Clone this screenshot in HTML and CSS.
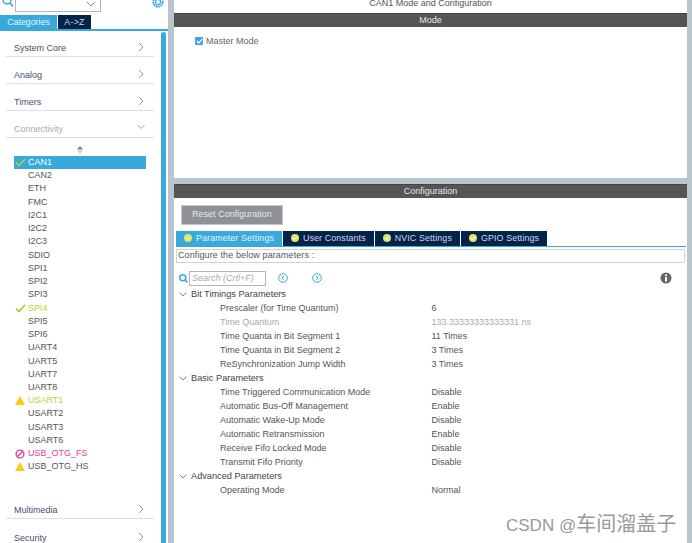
FILE: index.html
```html
<!DOCTYPE html>
<html lang="en">
<head>
  <meta charset="UTF-8" />
  <title>CAN1 Mode and Configuration</title>
  <link rel="stylesheet" href="styles.css">
</head>
<body>
  <div class="sidebar">
    <div class="search-row">
      <svg class="search-icon" width="12" height="12" viewBox="0 0 12 12"><circle cx="5" cy="4" r="4" fill="none" stroke="#39a9dc" stroke-width="1.5"/><path d="M8 7l3 3.500" stroke="#39a9dc" stroke-width="1.7"/></svg>
      <div class="search-box">
        <svg width="10" height="6" viewBox="0 0 10 6"><path d="M1 1l4 4 4-4" fill="none" stroke="#888" stroke-width="1"/></svg>
      </div>
      <svg class="gear" width="12" height="12" viewBox="0 0 12 12"><circle cx="6" cy="6" r="2.500" fill="none" stroke="#39a9dc" stroke-width="1.200"/><circle cx="6" cy="6" r="4.700" fill="none" stroke="#39a9dc" stroke-width="1.800" stroke-dasharray="2 .500"/></svg>
    </div>
    <div class="side-tabs">
      <div class="side-tab active">Categories</div>
      <div class="side-tab">A-&gt;Z</div>
    </div>
    <div class="side-body">
      <div class="side-content">
        <div class="category"><span>System Core</span><svg width="6" height="10" viewBox="0 0 6 10"><path d="M1 1l4 4-4 4" fill="none" stroke="#999" stroke-width="1"/></svg></div>
        <div class="category"><span>Analog</span><svg width="6" height="10" viewBox="0 0 6 10"><path d="M1 1l4 4-4 4" fill="none" stroke="#999" stroke-width="1"/></svg></div>
        <div class="category"><span>Timers</span><svg width="6" height="10" viewBox="0 0 6 10"><path d="M1 1l4 4-4 4" fill="none" stroke="#999" stroke-width="1"/></svg></div>
        <div class="category open"><span>Connectivity</span><svg width="8" height="6" viewBox="0 0 8 6"><path d="M.5 1L4 4.500 7.500 1" fill="none" stroke="#999" stroke-width="1"/></svg></div>
        <div class="sort-mark">
          <svg width="6" height="8" viewBox="0 0 6 8"><path d="M3 0l3 3.500H0z" fill="#777"/><path d="M3 8l3-3.500H0z" fill="#ccc"/></svg>
        </div>
        <ul class="periph">
          <li class="selected"><svg class="mark" width="11" height="9" viewBox="0 0 11 9"><path d="M1 4.500l3 3 6-6.500" fill="none" stroke="#b5d334" stroke-width="1.600"/></svg>CAN1</li>
          <li>CAN2</li>
          <li>ETH</li>
          <li>FMC</li>
          <li>I2C1</li>
          <li>I2C2</li>
          <li>I2C3</li>
          <li>SDIO</li>
          <li>SPI1</li>
          <li>SPI2</li>
          <li>SPI3</li>
          <li class="ok"><svg class="mark" width="11" height="9" viewBox="0 0 11 9"><path d="M1 4.500l3 3 6-6.500" fill="none" stroke="#a9c92c" stroke-width="1.600"/></svg>SPI4</li>
          <li>SPI5</li>
          <li>SPI6</li>
          <li>UART4</li>
          <li>UART5</li>
          <li>UART7</li>
          <li>UART8</li>
          <li class="ok"><svg class="mark" width="10" height="9" viewBox="0 0 10 9"><path d="M5 0l5 9H0z" fill="#fbc916"/></svg>USART1</li>
          <li>USART2</li>
          <li>USART3</li>
          <li>USART6</li>
          <li class="bad"><svg class="mark" width="10" height="10" viewBox="0 0 10 10"><circle cx="5" cy="5" r="3.900" fill="none" stroke="#e6399b" stroke-width="1.300"/><path d="M2.300 7.700l5.400-5.400" stroke="#e6399b" stroke-width="1.300"/></svg>USB_OTG_FS</li>
          <li><svg class="mark" width="10" height="9" viewBox="0 0 10 9"><path d="M5 0l5 9H0z" fill="#fbc916"/></svg>USB_OTG_HS</li>
        </ul>
        <div class="category low"><span>Multimedia</span><svg width="6" height="10" viewBox="0 0 6 10"><path d="M1 1l4 4-4 4" fill="none" stroke="#999" stroke-width="1"/></svg></div>
        <div class="category last"><span>Security</span><svg width="6" height="10" viewBox="0 0 6 10"><path d="M1 1l4 4-4 4" fill="none" stroke="#999" stroke-width="1"/></svg></div>
      </div>
      <div class="side-scroll"></div>
    </div>
  </div>

  <div class="main">
    <div class="mode-panel">
      <div class="panel-title">CAN1 Mode and Configuration</div>
      <div class="bar">Mode</div>
      <label class="master">
        <span class="checkbox"><svg width="7" height="6" viewBox="0 0 7 6"><path d="M.7 3l2 2L6.300.8" fill="none" stroke="#fff" stroke-width="1.200"/></svg></span>
        Master Mode
      </label>
    </div>
    <div class="config-panel">
      <div class="bar">Configuration</div>
      <button class="reset">Reset Configuration</button>
      <div class="tabs">
        <div class="tab active"><svg class="dot" width="8" height="8" viewBox="0 0 8 8"><circle cx="4" cy="4" r="4" fill="#dfe36c"/><path d="M2 4l1.500 1.500L6 2.800" fill="none" stroke="#fff" stroke-width="1"/></svg>Parameter Settings</div>
        <div class="tab"><svg class="dot" width="8" height="8" viewBox="0 0 8 8"><circle cx="4" cy="4" r="4" fill="#dfe36c"/><path d="M2 4l1.500 1.500L6 2.800" fill="none" stroke="#fff" stroke-width="1"/></svg>User Constants</div>
        <div class="tab"><svg class="dot" width="8" height="8" viewBox="0 0 8 8"><circle cx="4" cy="4" r="4" fill="#dfe36c"/><path d="M2 4l1.500 1.500L6 2.800" fill="none" stroke="#fff" stroke-width="1"/></svg>NVIC Settings</div>
        <div class="tab"><svg class="dot" width="8" height="8" viewBox="0 0 8 8"><circle cx="4" cy="4" r="4" fill="#dfe36c"/><path d="M2 4l1.500 1.500L6 2.800" fill="none" stroke="#fff" stroke-width="1"/></svg>GPIO Settings</div>
      </div>
      <div class="hint">Configure the below parameters :</div>
      <div class="tools">
        <svg width="9" height="9" viewBox="0 0 12 12"><circle cx="5" cy="5" r="4" fill="none" stroke="#39a9dc" stroke-width="2"/><path d="M8 8l3.500 3.500" stroke="#39a9dc" stroke-width="2"/></svg>
        <div class="param-search">Search (Crtl+F)</div>
        <svg class="nav" width="10" height="10" viewBox="0 0 10 10"><circle cx="5" cy="5" r="4.300" fill="none" stroke="#39a9dc"/><path d="M6 3L4 5l2 2" fill="none" stroke="#39a9dc"/></svg>
        <svg class="nav next" width="10" height="10" viewBox="0 0 10 10"><circle cx="5" cy="5" r="4.300" fill="none" stroke="#39a9dc"/><path d="M4 3l2 2-2 2" fill="none" stroke="#39a9dc"/></svg>
        <svg class="info" width="12" height="12" viewBox="0 0 12 12"><circle cx="6" cy="6" r="5.500" fill="#666"/><rect x="5" y="5" width="2" height="4.500" fill="#fff"/><rect x="5" y="2.500" width="2" height="1.600" fill="#fff"/></svg>
      </div>
      <div class="params">
        <div class="group"><svg width="8" height="5" viewBox="0 0 8 5"><path d="M.5.500L4 4 7.500.500" fill="none" stroke="#888"/></svg>Bit Timings Parameters</div>
        <div class="param"><span>Prescaler (for Time Quantum)</span><span>6</span></div>
        <div class="param muted"><span>Time Quantum</span><span>133.33333333333331 ns</span></div>
        <div class="param"><span>Time Quanta in Bit Segment 1</span><span>11 Times</span></div>
        <div class="param"><span>Time Quanta in Bit Segment 2</span><span>3 Times</span></div>
        <div class="param"><span>ReSynchronization Jump Width</span><span>3 Times</span></div>
        <div class="group"><svg width="8" height="5" viewBox="0 0 8 5"><path d="M.5.500L4 4 7.500.500" fill="none" stroke="#888"/></svg>Basic Parameters</div>
        <div class="param"><span>Time Triggered Communication Mode</span><span>Disable</span></div>
        <div class="param"><span>Automatic Bus-Off Management</span><span>Enable</span></div>
        <div class="param"><span>Automatic Wake-Up Mode</span><span>Disable</span></div>
        <div class="param"><span>Automatic Retransmission</span><span>Enable</span></div>
        <div class="param"><span>Receive Fifo Locked Mode</span><span>Disable</span></div>
        <div class="param"><span>Transmit Fifo Priority</span><span>Disable</span></div>
        <div class="group"><svg width="8" height="5" viewBox="0 0 8 5"><path d="M.5.500L4 4 7.500.500" fill="none" stroke="#888"/></svg>Advanced Parameters</div>
        <div class="param"><span>Operating Mode</span><span>Normal</span></div>
      </div>
    </div>
  </div>

  <div class="watermark">CSDN @<span class="wm-cjk">车间溜盖子</span></div>
</body>
</html>
```

FILE: styles.css
```css
html, body {
  height: 100%;
}

body {
  margin: 0;
  width: 692px;
  height: 543px;
  overflow: hidden;
  display: flex;
  position: relative;
  background: #b9c5cc;
  color: #555;
  font-family: "Liberation Sans", Arial, sans-serif;
  font-size: 9px;
}

/* left column */
.sidebar {
  width: 168px;
  background: #fff;
  flex-shrink: 0;
  height: 543px;
  overflow: hidden;
}

.search-row {
  height: 15px;
  display: flex;
  align-items: flex-start;
  padding-left: 2px;
  overflow: hidden;
}

.search-icon {
  margin-top: -4px;
  flex-shrink: 0;
}

.search-box {
  width: 80px;
  height: 10px;
  margin-left: 1px;
  border: 1px solid #b5b5b5;
  border-top: none;
  display: flex;
  justify-content: flex-end;
  align-items: flex-start;
  padding-right: 4px;
  padding-top: 1px;
  box-sizing: content-box;
  background: #fff;
}

.gear {
  margin-left: auto;
  margin-right: 4px;
  margin-top: -4px;
}

.side-tabs {
  display: flex;
  height: 14px;
  border-bottom: 2px solid #39a9dc;
  gap: 1px;
}

.side-tab {
  width: 33px;
  background: #03234b;
  color: #cfd6df;
  text-align: center;
  line-height: 14px;
  font-size: 8.800px;
  letter-spacing: 0.3px;
}

.side-tab.active {
  width: 57px;
  background: #39a9dc;
  color: #e8f4fa;
  letter-spacing: 0;
}

.side-body {
  display: flex;
  padding-top: 1px;
}

.side-content {
  width: 148px;
  padding-left: 6px;
  flex-shrink: 0;
}

.side-scroll {
  width: 5px;
  height: 512px;
  margin-left: 7px;
  background: #39a9dc;
  border-radius: 3px 3px 0 0;
}

.category {
  height: 26px;
  margin-top: 1px;
  border-bottom: 1px solid #dde1e5;
  display: flex;
  align-items: flex-end;
  justify-content: space-between;
  padding: 0 10px 3px 8px;
  box-sizing: border-box;
  color: #44506e;
  font-size: 9px;
}

.category:first-child {
  height: 25px;
  margin-top: 0;
}

.category svg {
  margin-bottom: 1.500px;
}

.category.open {
  color: #aaa;
}

.category.open svg {
  margin-bottom: 4px;
  margin-right: -1px;
}

.category.last {
  border-bottom: none;
}

.sort-mark {
  height: 18px;
  width: 132px;
  text-align: center;
  padding-top: 8px;
  box-sizing: border-box;
  margin-left: 8px;
  line-height: 8px;
}

.periph {
  list-style: none;
  margin: 0 0 0 8px;
  padding: 0;
  width: 132px;
}

.periph li {
  height: 13.240px;
  line-height: 13.240px;
  padding-left: 14px;
  position: relative;
  color: #555;
}

.periph li.selected {
  background: #39a9dc;
  color: #fff;
}

.periph li.ok {
  color: #b9d12f;
}

.periph li.bad {
  color: #e6399b;
}

.mark {
  position: absolute;
  left: 1px;
  top: 2px;
}

.category.low {
  margin-top: 19.400px;
  height: 26px;
}

/* right column */
.main {
  width: 513px;
  margin-left: 6px;
  flex-shrink: 0;
  display: flex;
  flex-direction: column;
  gap: 6px;
}

.mode-panel {
  height: 178px;
  background: #fff;
}

.panel-title {
  height: 13px;
  line-height: 6px;
  text-align: center;
  color: #555;
}

.bar {
  background: #555;
  color: #e4e6e8;
  height: 13.500px;
  line-height: 13px;
  text-align: center;
  border-top: 1px solid #444;
  box-sizing: border-box;
}

.master {
  display: flex;
  align-items: center;
  gap: 3px;
  margin: 9px 0 0 21px;
  height: 10px;
  color: #666;
}

.checkbox {
  width: 8px;
  height: 8px;
  background: #39a9dc;
  display: flex;
  align-items: center;
  justify-content: center;
}

.config-panel {
  flex: 1;
  background: #fff;
}

.reset {
  display: block;
  width: 102px;
  height: 20px;
  margin: 7px 0 0 7px;
  padding: 0 0 2px;
  border: 1px solid #c5c8cb;
  background: #8e9296;
  color: #e7e9eb;
  font: inherit;
  font-size: 8.800px;
  letter-spacing: 0.1px;
}

.tabs {
  display: flex;
  margin: 6px 0 0 2px;
  height: 15px;
  width: 510px;
  border-bottom: 1px solid #39a9dc;
  gap: 1px;
}

.tab {
  padding: 0 8px 1px;
  background: #03234b;
  color: #d4dae2;
  display: flex;
  align-items: center;
  gap: 4px;
  font-size: 8.800px;
  letter-spacing: 0.15px;
}

.tab.active {
  background: #39a9dc;
  color: #e8f4fa;
}

.hint {
  margin: 2px 2px 0 2px;
  height: 14px;
  line-height: 11px;
  border: 1px solid #cfd3d6;
  box-sizing: border-box;
  padding-left: 1px;
  letter-spacing: 0.1px;
}

.tools {
  display: flex;
  align-items: center;
  height: 15px;
  margin-top: 8px;
  padding-left: 5px;
}

.param-search {
  width: 77px;
  height: 15px;
  margin-left: 1px;
  border: 1px solid #b5b5b5;
  box-sizing: border-box;
  line-height: 13px;
  padding-left: 2px;
  color: #aaa;
  font-style: italic;
}

.nav {
  margin-left: 11.500px;
}

.nav.next {
  margin-left: 24px;
}

.info {
  margin-left: auto;
  margin-right: 15px;
}

.params {
  margin-top: 1.500px;
}

.group {
  height: 14px;
  line-height: 14px;
  display: flex;
  align-items: center;
  gap: 4px;
  padding-left: 5px;
  color: #444;
  font-size: 9.200px;
}

.param {
  height: 14px;
  line-height: 14px;
  display: flex;
  padding-left: 46px;
  color: #555;
}

.param span:first-child {
  width: 211.500px;
}

.param.muted {
  color: #aaa;
}

/* sits over the page, bottom right */
.watermark {
  position: absolute;
  left: 506px;
  top: 514px;
  font-size: 17px;
  line-height: 20px;
  color: #999;
  font-family: "Liberation Sans", "Noto Sans CJK SC", sans-serif;
}

.wm-cjk {
  font-size: 20px;
}
```
